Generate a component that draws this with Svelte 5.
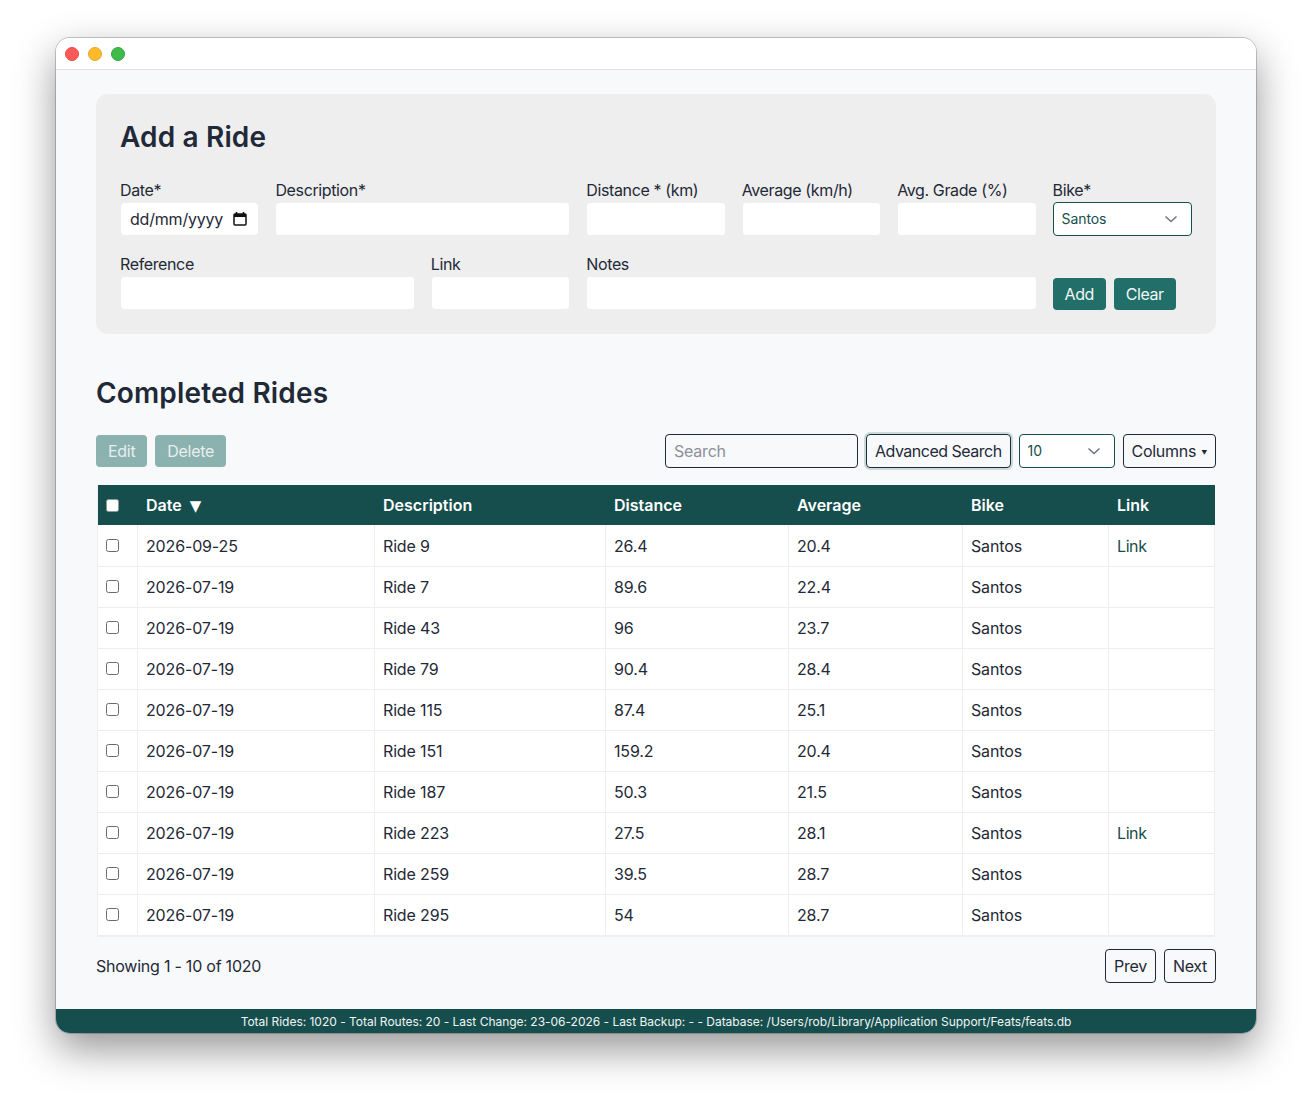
<script lang="ts">
  const rides = [
    { date: '2026-09-25', desc: 'Ride 9', dist: '26.4', avg: '20.4', link: true },
    { date: '2026-07-19', desc: 'Ride 7', dist: '89.6', avg: '22.4', link: false },
    { date: '2026-07-19', desc: 'Ride 43', dist: '96', avg: '23.7', link: false },
    { date: '2026-07-19', desc: 'Ride 79', dist: '90.4', avg: '28.4', link: false },
    { date: '2026-07-19', desc: 'Ride 115', dist: '87.4', avg: '25.1', link: false },
    { date: '2026-07-19', desc: 'Ride 151', dist: '159.2', avg: '20.4', link: false },
    { date: '2026-07-19', desc: 'Ride 187', dist: '50.3', avg: '21.5', link: false },
    { date: '2026-07-19', desc: 'Ride 223', dist: '27.5', avg: '28.1', link: true },
    { date: '2026-07-19', desc: 'Ride 259', dist: '39.5', avg: '28.7', link: false },
    { date: '2026-07-19', desc: 'Ride 295', dist: '54', avg: '28.7', link: false }
  ];
</script>

<div class="window">
  <div class="titlebar">
    <span class="dot red"></span>
    <span class="dot yellow"></span>
    <span class="dot green"></span>
  </div>

  <main>
    <section class="card">
      <h2>Add a Ride</h2>
      <form class="grid">
        <div class="field">
          <label for="date">Date*</label>
          <div class="date-input" id="date">
            <span>dd/mm/yyyy</span>
            <svg width="16" height="16" viewBox="0 0 16 16" aria-hidden="true">
              <path d="M4.5 1v2.5M11.5 1v2.5" stroke="#111" stroke-width="1.6" fill="none" />
              <rect x="2" y="3" width="12" height="11" rx="1" stroke="#111" stroke-width="1.5" fill="none" />
              <rect x="2" y="3" width="12" height="3" fill="#111" />
            </svg>
          </div>
        </div>
        <div class="field span2">
          <label for="desc">Description*</label>
          <input id="desc" type="text" />
        </div>
        <div class="field">
          <label for="dist">Distance * (km)</label>
          <input id="dist" type="text" />
        </div>
        <div class="field">
          <label for="avg">Average (km/h)</label>
          <input id="avg" type="text" />
        </div>
        <div class="field">
          <label for="grade">Avg. Grade (%)</label>
          <input id="grade" type="text" />
        </div>
        <div class="field">
          <label for="bike">Bike*</label>
          <div class="select-wrap">
            <select id="bike"><option>Santos</option></select>
            <svg class="chevron" width="14" height="8" viewBox="0 0 14 8" aria-hidden="true">
              <path d="M1.5 1.5 7 6.5l5.5-5" stroke="#6b7280" stroke-width="1.4" fill="none" />
            </svg>
          </div>
        </div>

        <div class="field span2">
          <label for="ref">Reference</label>
          <input id="ref" type="text" />
        </div>
        <div class="field">
          <label for="link">Link</label>
          <input id="link" type="text" />
        </div>
        <div class="field span3">
          <label for="notes">Notes</label>
          <input id="notes" type="text" />
        </div>
        <div class="form-actions">
          <button type="button" class="btn solid">Add</button>
          <button type="button" class="btn solid">Clear</button>
        </div>
      </form>
    </section>

    <h2 class="rides-title">Completed Rides</h2>

    <div class="toolbar">
      <div class="group">
        <button class="btn solid faded">Edit</button>
        <button class="btn solid faded">Delete</button>
      </div>
      <div class="group tools">
        <input class="search" type="text" placeholder="Search" />
        <button class="btn outline focused">Advanced Search</button>
        <div class="select-wrap per-page">
          <select><option>10</option></select>
          <svg class="chevron" width="14" height="8" viewBox="0 0 14 8" aria-hidden="true">
            <path d="M1.5 1.5 7 6.5l5.5-5" stroke="#6b7280" stroke-width="1.4" fill="none" />
          </svg>
        </div>
        <button class="btn outline">Columns <span class="caret">▼</span></button>
      </div>
    </div>

    <table>
      <colgroup>
        <col style="width: 39px" />
        <col style="width: 237px" />
        <col style="width: 231px" />
        <col style="width: 183px" />
        <col style="width: 174px" />
        <col style="width: 146px" />
        <col />
      </colgroup>
      <thead>
        <tr>
          <th class="check"><input type="checkbox" class="box head" /></th>
          <th>Date <span class="sort">▼</span></th>
          <th>Description</th>
          <th>Distance</th>
          <th>Average</th>
          <th>Bike</th>
          <th>Link</th>
        </tr>
      </thead>
      <tbody>
        {#each rides as ride}
          <tr>
            <td class="check"><input type="checkbox" class="box" /></td>
            <td>{ride.date}</td>
            <td>{ride.desc}</td>
            <td>{ride.dist}</td>
            <td>{ride.avg}</td>
            <td>Santos</td>
            <td>{#if ride.link}<a href="#top">Link</a>{/if}</td>
          </tr>
        {/each}
      </tbody>
    </table>

    <div class="pager">
      <span>Showing 1 - 10 of 1020</span>
      <div class="group">
        <button class="btn outline">Prev</button>
        <button class="btn outline">Next</button>
      </div>
    </div>
  </main>

  <footer>Total Rides: 1020 - Total Routes: 20 - Last Change: 23-06-2026 - Last Backup: - - Database: /Users/rob/Library/Application Support/Feats/feats.db</footer>
</div>

<style>
  :global(body) {
    margin: 0;
    background: #fff;
    font-family: Inter, "Liberation Sans", sans-serif;
    color: #1f2937;
  }

  .window {
    width: 1200px;
    height: 995px;
    margin: 38px 0 75px 56px;
    display: flex;
    flex-direction: column;
    background: #f8f9fb;
    border-radius: 14px;
    overflow: hidden;
    box-shadow: 0 0 0 1px rgba(0, 0, 0, 0.2), 0 16px 40px rgba(0, 0, 0, 0.42);
  }

  .titlebar {
    height: 31px;
    flex: none;
    display: flex;
    align-items: center;
    gap: 9px;
    padding-left: 9px;
    background: #fff;
    border-bottom: 1px solid #e2e3e6;
  }

  .dot {
    width: 14px;
    height: 14px;
    border-radius: 50%;
    box-sizing: border-box;
  }
  .red { background: #ff5a58; border: 1px solid #e8494a; }
  .yellow { background: #fdbb2c; border: 1px solid #e5a823; }
  .green { background: #3fbb4c; border: 1px solid #33a63f; }

  main {
    flex: 1;
    padding: 24px 40px 0;
    min-height: 0;
  }

  .card {
    height: 240px;
    box-sizing: border-box;
    padding: 24px;
    background: #eeeeee;
    border-radius: 12px;
  }

  h2 {
    margin: 0;
    font-size: 28px;
    line-height: 38px;
    font-weight: 600;
    letter-spacing: 0.15px;
    color: #1f2937;
  }

  .grid {
    display: grid;
    grid-template-columns: repeat(7, 1fr);
    column-gap: 16px;
    row-gap: 16px;
    margin-top: 22px;
  }

  .field {
    display: flex;
    flex-direction: column;
    min-width: 0;
  }
  .span2 { grid-column: span 2; }
  .span3 { grid-column: span 3; }

  label {
    font-size: 16px;
    line-height: 24px;
    letter-spacing: -0.37px;
    color: #1f2937;
  }

  input[type='text'] {
    box-sizing: border-box;
    height: 34px;
    width: 100%;
    padding: 0 9px;
    border: 1px solid #eeeeee;
    border-radius: 4px;
    background: #fff;
    font: inherit;
    font-size: 16px;
    letter-spacing: -0.2px;
    outline: none;
  }

  .date-input {
    box-sizing: border-box;
    height: 34px;
    display: flex;
    align-items: center;
    justify-content: space-between;
    padding: 0 10px 0 9px;
    background: #fff;
    border: 1px solid #eeeeee;
    border-radius: 5px;
    font-size: 16px;
    letter-spacing: -0.2px;
  }

  .select-wrap {
    position: relative;
  }
  .select-wrap select {
    appearance: none;
    box-sizing: border-box;
    width: 100%;
    height: 34px;
    padding: 0 8px 1px;
    border: 1px solid #164e4d;
    border-radius: 4px;
    background: #fff;
    color: #164e4d;
    font: inherit;
    font-size: 14px;
    letter-spacing: -0.1px;
  }
  .chevron {
    position: absolute;
    right: 14px;
    top: 13px;
    pointer-events: none;
  }

  .form-actions {
    display: flex;
    align-items: flex-end;
    gap: 8px;
  }

  .btn {
    box-sizing: border-box;
    height: 32px;
    padding: 0 12px;
    border-radius: 4px;
    font: inherit;
    font-size: 16px;
    letter-spacing: -0.3px;
    white-space: nowrap;
  }
  .solid {
    background: #226e68;
    border: none;
    color: #f1f7f6;
    letter-spacing: -0.45px;
  }
  .faded {
    background: #8cb2b0;
    color: #e6efee;
    letter-spacing: -0.3px;
  }
  .outline {
    height: 34px;
    padding: 0 8px;
    background: transparent;
    border: 1px solid #1f2937;
    color: #1f2937;
  }
  .focused {
    letter-spacing: -0.5px;
    box-shadow: 0 0 0 2px #c9dcdb;
  }

  .rides-title {
    margin-top: 40px;
  }

  .toolbar {
    display: flex;
    justify-content: space-between;
    align-items: center;
    margin-top: 22px;
    height: 34px;
  }
  .group {
    display: flex;
    gap: 8px;
    align-items: center;
  }

  input.search {
    width: 193px;
    height: 34px;
    padding: 0 8px;
    background: transparent;
    border: 1px solid #1f2937;
  }
  input.search::placeholder {
    color: #8b9099;
  }

  .per-page {
    width: 96px;
  }
  .caret {
    font-size: 6px;
    vertical-align: 2px;
    margin-left: 1px;
  }

  table {
    width: 1118px;
    margin: 17px 0 0 1px;
    table-layout: fixed;
    border-collapse: separate;
    border-spacing: 0;
    background: #fff;
    border-left: 1px solid #eeeeee;
    border-bottom: 1px solid #eeeeee;
    box-sizing: border-box;
    font-size: 16px;
  }

  th {
    height: 40px;
    padding: 0 9px;
    text-align: left;
    font-weight: 600;
    background: #164e4d;
    color: #fff;
  }

  td {
    box-sizing: border-box;
    height: 41px;
    padding: 0 8px;
    letter-spacing: -0.15px;
    border-bottom: 1px solid #eeeeee;
    border-left: 1px solid #eeeeee;
  }
  td:first-child {
    border-left: none;
  }
  td:last-child {
    border-right: 1px solid #eeeeee;
  }
  tbody tr:first-child td {
    height: 42px;
    padding-top: 1px;
  }

  th.check {
    padding: 0 0 0 8px;
  }
  td.check,
  tbody tr:first-child td.check {
    padding-left: 8px;
    padding-right: 0;
    padding-bottom: 2px;
  }

  .box {
    appearance: none;
    display: block;
    box-sizing: border-box;
    width: 13px;
    height: 13px;
    margin: 0;
    background: #fff;
    border: 1px solid #6b6b6b;
    border-radius: 2.5px;
  }
  .box.head {
    border-color: #8a9a99;
  }

  .sort {
    display: inline-block;
    margin-left: 4px;
    font-size: 15px;
    line-height: 1;
    font-family: "DejaVu Sans", sans-serif;
  }

  a {
    color: #164e4d;
    letter-spacing: -0.4px;
    text-decoration: none;
  }

  .pager {
    display: flex;
    justify-content: space-between;
    align-items: center;
    margin-top: 12px;
    font-size: 16px;
    letter-spacing: -0.23px;
  }

  footer {
    flex: none;
    height: 24px;
    line-height: 25px;
    text-align: center;
    font-size: 12px;
    letter-spacing: -0.02px;
    background: #164e4d;
    color: #f1f5f5;
  }
</style>
